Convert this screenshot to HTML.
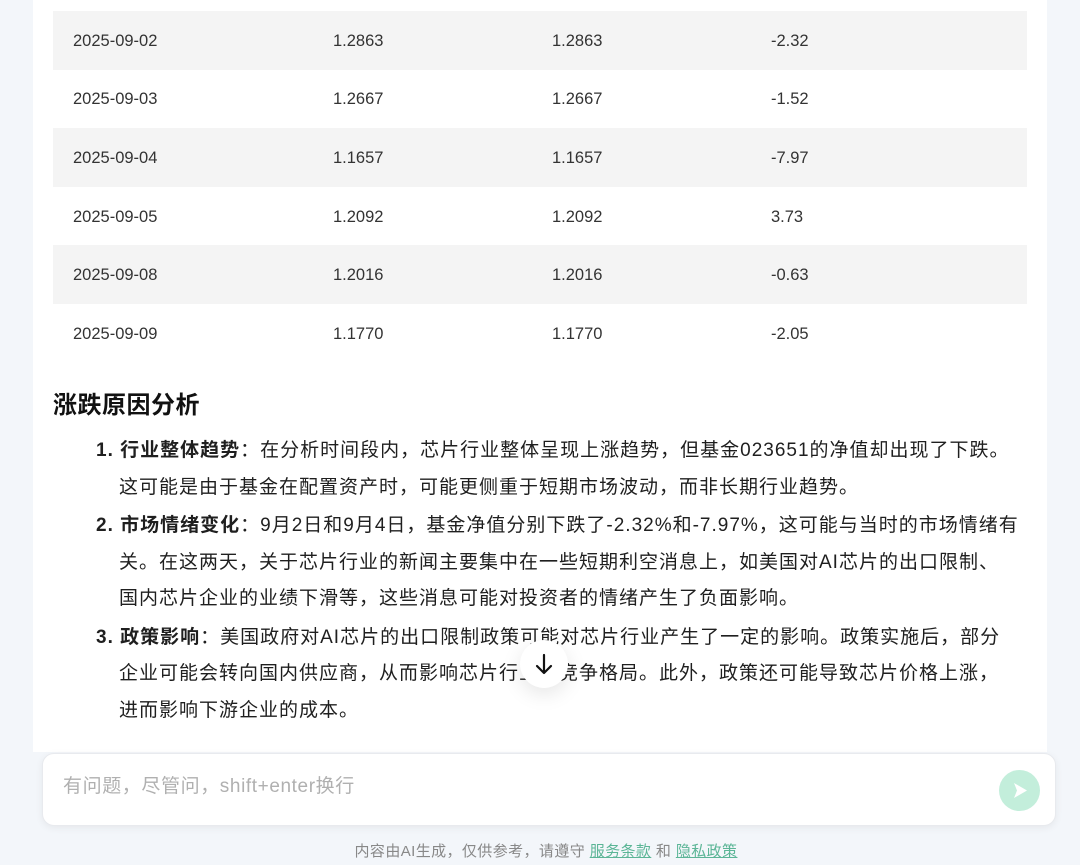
<!DOCTYPE html>
<html><head><meta charset="utf-8"><style>
body{margin:0;width:1080px;height:865px;background:#f3f6fa;font-family:"Liberation Sans","Noto Sans CJK SC",sans-serif;position:relative;overflow:hidden;color:#1f1f1f}
.panel{position:absolute;left:33px;top:0;width:1014px;height:752px;background:#fff}
table{position:absolute;left:53px;top:11px;width:974px;border-collapse:collapse;font-size:16.5px;color:#333}
td{height:58.6px;padding:0;padding-top:2px;box-sizing:border-box;vertical-align:middle}
tr:nth-child(odd){background:#f4f4f4}
td:nth-child(1){padding-left:20px;width:280px}
td:nth-child(2){width:219px}
td:nth-child(3){width:219px}
h2{position:absolute;left:53px;top:385px;margin:0;font-size:24px;font-weight:bold;color:#111;letter-spacing:0.5px}
ol{position:absolute;left:96px;top:433px;margin:0;padding:0;width:960px;font-size:19px;line-height:36.5px;list-style:none;white-space:nowrap;letter-spacing:1.0px}
ol li{padding-left:23px;text-indent:-23px;margin-bottom:2px}
.input{position:absolute;left:42px;top:753px;width:1012px;height:71px;background:#fff;border:1px solid #e8eaee;border-radius:12px;box-shadow:0 2px 8px rgba(0,0,0,.06)}
.ph{position:absolute;left:20px;top:17px;font-size:19px;color:#b0b0b0;letter-spacing:0.6px}
.send{position:absolute;left:956px;top:16px;width:41px;height:41px;border-radius:50%;background:#c3eedb}
.foot{position:absolute;left:0;width:1092px;top:840px;text-align:center;font-size:15px;color:#888;letter-spacing:0.4px}
.foot a{color:#5bb596;text-decoration:underline}
.down{position:absolute;left:520px;top:640px;width:48px;height:48px;border-radius:50%;background:#fff;box-shadow:0 6px 20px rgba(0,0,0,.1)}
</style></head><body>
<div class="panel"></div>
<table>
<tr><td>2025-09-02</td><td>1.2863</td><td>1.2863</td><td>-2.32</td></tr>
<tr><td>2025-09-03</td><td>1.2667</td><td>1.2667</td><td>-1.52</td></tr>
<tr><td>2025-09-04</td><td>1.1657</td><td>1.1657</td><td>-7.97</td></tr>
<tr><td>2025-09-05</td><td>1.2092</td><td>1.2092</td><td>3.73</td></tr>
<tr><td>2025-09-08</td><td>1.2016</td><td>1.2016</td><td>-0.63</td></tr>
<tr><td>2025-09-09</td><td>1.1770</td><td>1.1770</td><td>-2.05</td></tr>
</table>
<h2>涨跌原因分析</h2>
<ol>
<li><b>1. 行业整体趋势</b>：在分析时间段内，芯片行业整体呈现上涨趋势，但基金023651的净值却出现了下跌。<br>这可能是由于基金在配置资产时，可能更侧重于短期市场波动，而非长期行业趋势。</li>
<li><b>2. 市场情绪变化</b>：9月2日和9月4日，基金净值分别下跌了-2.32%和-7.97%，这可能与当时的市场情绪有<br>关。在这两天，关于芯片行业的新闻主要集中在一些短期利空消息上，如美国对AI芯片的出口限制、<br>国内芯片企业的业绩下滑等，这些消息可能对投资者的情绪产生了负面影响。</li>
<li><b>3. 政策影响</b>：美国政府对AI芯片的出口限制政策可能对芯片行业产生了一定的影响。政策实施后，部分<br>企业可能会转向国内供应商，从而影响芯片行业的竞争格局。此外，政策还可能导致芯片价格上涨，<br>进而影响下游企业的成本。</li>
</ol>
<div class="down"><svg width="48" height="48" viewBox="0 0 48 48"><path d="M24 15v17M17 26l7 7 7-7" stroke="#111" stroke-width="2.2" fill="none" stroke-linecap="round" stroke-linejoin="round"/></svg></div>
<div class="input"><div class="ph">有问题，尽管问，shift+enter换行</div>
<div class="send"><svg width="41" height="41" viewBox="0 0 41 41"><path d="M15 13l13 7.5-13 7.5 3-7.5z" fill="#fff"/></svg></div></div>
<div class="foot">内容由AI生成，仅供参考，请遵守 <a>服务条款</a> 和 <a>隐私政策</a></div>
</body></html>
